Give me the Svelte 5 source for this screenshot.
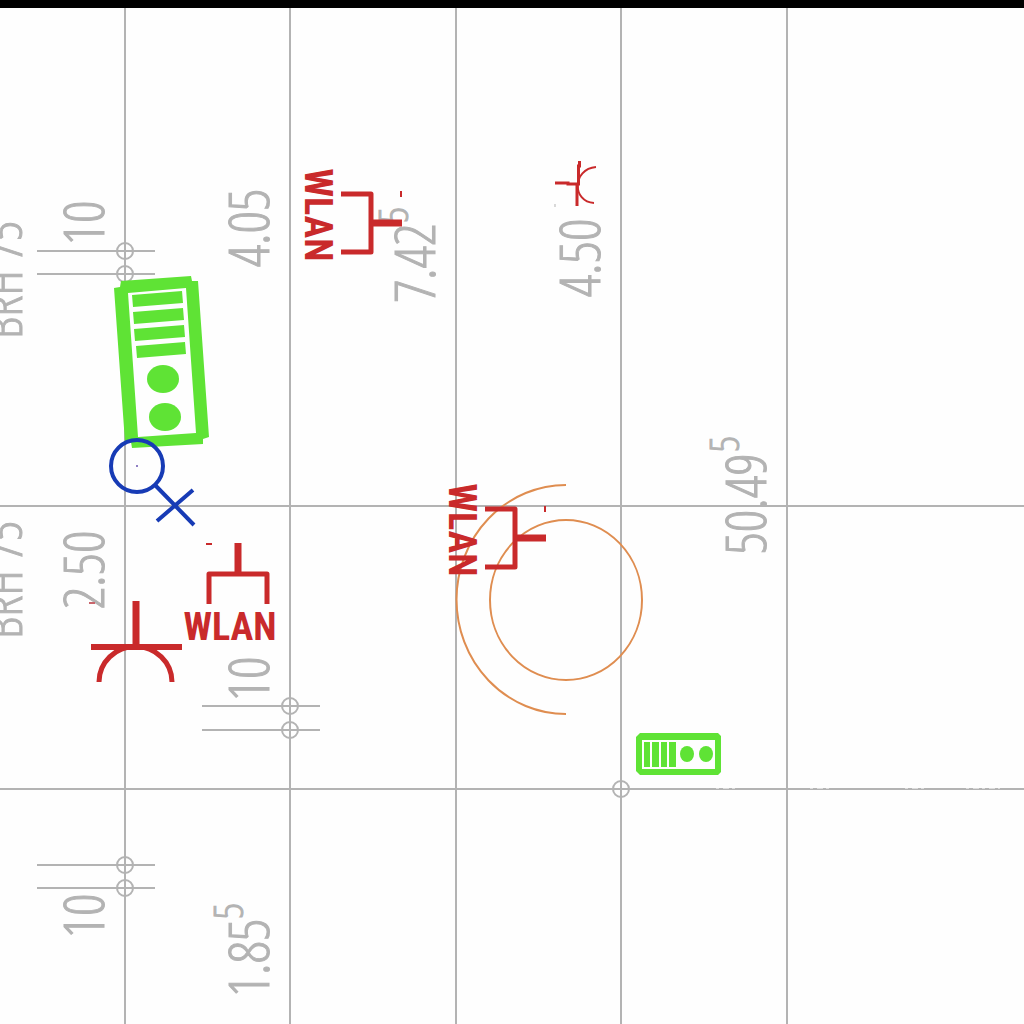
<script>
  const columns = [125, 290, 456, 621, 787];

  const ticks = [
    { x: 125, y: 251, from: 37, to: 155 },
    { x: 125, y: 274, from: 37, to: 155 },
    { x: 290, y: 706, from: 202, to: 320 },
    { x: 290, y: 730, from: 202, to: 320 },
    { x: 125, y: 865, from: 37, to: 155 },
    { x: 125, y: 888, from: 37, to: 155 }
  ];

  const dimensions = [
    { x: 104, y: 223, text: '10' },
    { x: 269, y: 228, text: '4.05' },
    { x: 435, y: 263, text: '7.42' },
    { x: 600, y: 258, text: '4.50' },
    { x: 104, y: 570, text: '2.50' },
    { x: 269, y: 679, text: '10' },
    { x: 766, y: 504, text: '50.49' },
    { x: 104, y: 916, text: '10' },
    { x: 269, y: 958, text: '1.85' }
  ];

  const raised = [
    { x: 408, y: 215 },
    { x: 739, y: 444 },
    { x: 243, y: 911 }
  ];

  const heights = [
    { x: 22, y: 280 },
    { x: 22, y: 580 }
  ];

  const accessPoints = [
    { x: 371, y: 223, turn: 90 },
    { x: 515, y: 538, turn: 90 },
    { x: 238, y: 574, turn: 0 }
  ];
</script>

<main>
  <div class="bar"></div>
  <svg viewBox="0 8 1024 1016" role="img" aria-label="Floor plan with WLAN outlets">
    <g class="grid">
      {#each columns as x}
        <path d="M{x} 8V1024" />
      {/each}
      <path d="M0 506H1024M0 789H1024" />
      <path class="worn" d="M716 788.500H735M810 788.500H832M905 788.500H925M966 788.500H1000" />
      {#each ticks as t}
        <path d="M{t.from} {t.y}H{t.to}" />
        <circle cx={t.x} cy={t.y} r="8" />
      {/each}
      <circle cx="621" cy="789" r="8" />
    </g>

    <g class="label">
      {#each dimensions as d}
        <text transform="translate({d.x} {d.y}) rotate(-90)">{d.text}</text>
      {/each}
      {#each raised as r}
        <text class="raised" transform="translate({r.x} {r.y}) rotate(-90)">5</text>
      {/each}
      {#each heights as h}
        <text class="height" transform="translate({h.x} {h.y}) rotate(-90)">BRH 75</text>
      {/each}
    </g>

    <g class="orange">
      <ellipse cx="566" cy="600" rx="76" ry="80" />
      <path d="M566 485A109 114 0 0 0 566 714" />
    </g>

    <g class="green">
      <path d="M121 281L191 276L192 281L198 281L209 437L203 439L203 444L132 448L131 442L125 442L114 288L120 287ZM128 293L138 437L196 433L186 288Z" />
      <path d="M132 295L182 291L183 303L133 307ZM133 312L183 308L184 320L134 324ZM134 329L184 325L185 337L135 341ZM136 346L185 342L186 354L137 358Z" />
      <ellipse cx="163" cy="379" rx="16" ry="14" />
      <ellipse cx="165" cy="417" rx="16" ry="14" />
      <path d="M640 733H718L721 736V772L718 775H640L636 771V737ZM642 740V769H715V740Z" />
      <path d="M644 742H650V767H644ZM652 742H659V767H652ZM661 742H667V767H661ZM669 742H676V767H669Z" />
      <ellipse cx="687" cy="754" rx="7" ry="8" />
      <ellipse cx="706" cy="754" rx="7" ry="8" />
    </g>

    <g class="blue">
      <circle cx="137" cy="466" r="26" />
      <path d="M155 485L194 525M157 521L193 490" />
      <circle class="dot" cx="137" cy="466" r="1" />
    </g>

    {#each accessPoints as a}
      <g class="outlet" transform="translate({a.x} {a.y}) rotate({a.turn})">
        <path class="frame" d="M-29 30V0H29V30" />
        <path class="stem" d="M0 0V-31" />
        <path class="mark" d="M-32 -30H-26" />
        <text x="-8" y="66">WLAN</text>
      </g>
    {/each}

    <g class="socket">
      <path d="M91 647H182" />
      <path class="post" d="M136 601V647" />
      <path class="cup" d="M99 682A36 35 0 0 1 172 682" />
      <path class="faint" d="M89 603H95" />
    </g>
    <g class="small-socket">
      <path d="M555 183H568V184H577M579.500 161V166H578.500V184H577V206" />
      <path class="thin" d="M596 167C572 169 572 202 594 203" />
      <path class="speck" d="M555 204V207" />
    </g>
  </svg>
</main>

<style>
  :global(body) { margin: 0; background: #fff; }
  main { display: flex; flex-direction: column; background: #fefefe; }
  .bar { height: 8px; background: #000; }
  svg { display: block; width: 100%; height: auto; }
  .grid { fill: none; stroke: #b3b3b3; stroke-width: 2; }
  .worn { stroke: #dcdcdc; stroke-width: 1; stroke-dasharray: 3 4 6 3; }
  .label { fill: #b3b3b3; stroke: #b3b3b3; stroke-width: 1; font-family: "Open Sans Condensed Light", "Open Sans Condensed", "Roboto Condensed", "Liberation Sans Narrow", "Liberation Sans", sans-serif; font-weight: 300; font-size: 56px; text-anchor: middle; }
  .raised { font-size: 40px; }
  .height { font-size: 50px; }
  .orange { fill: none; stroke: #df8d50; stroke-width: 2; }
  .green { fill: #5fe335; fill-rule: evenodd; }
  .blue { fill: none; stroke: #173bb5; stroke-width: 4; }
  .dot { fill: #6a55b0; stroke: none; }
  .outlet { fill: #c92a2b; }
  .outlet path { fill: none; stroke: #c92a2b; }
  .outlet .frame { stroke-width: 5; stroke-linejoin: round; }
  .outlet .stem { stroke-width: 7; }
  .outlet .mark { stroke-width: 2; }
  .outlet text { font-family: "Roboto Condensed", "Liberation Sans Narrow", "Liberation Sans", sans-serif; font-weight: 700; font-size: 38px; text-anchor: middle; }
  .socket { fill: none; stroke: #c92a2b; stroke-width: 6; }
  .post { stroke-width: 7; }
  .cup { stroke-width: 5; }
  .faint { stroke: #c9656c; stroke-width: 2; }
  .small-socket { fill: none; stroke: #c92a2b; stroke-width: 3; }
  .thin { stroke-width: 2; }
  .speck { stroke: #b3b3b3; stroke-width: 1; }
</style>
